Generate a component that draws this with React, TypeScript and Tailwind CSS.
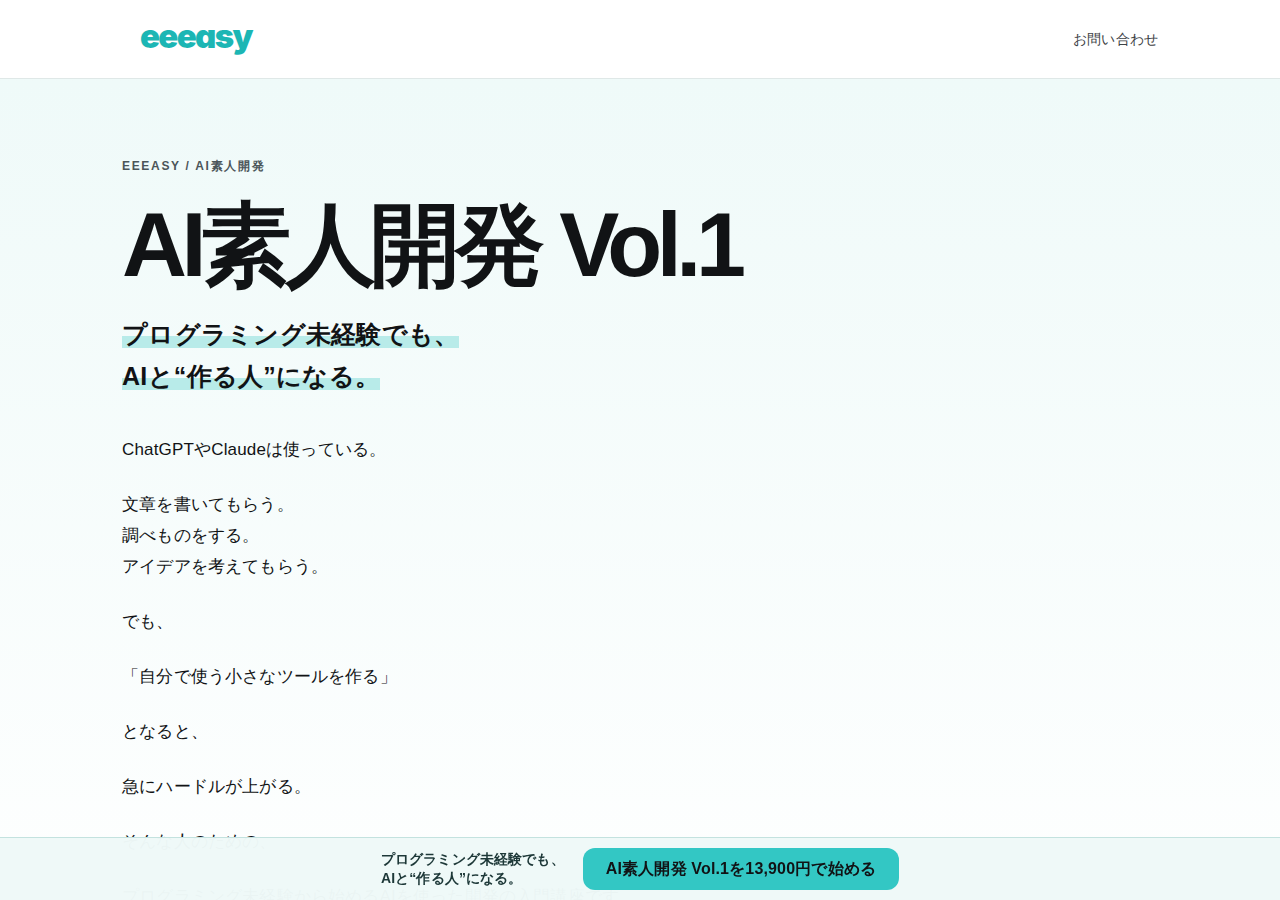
const paragraphs = [
  ['ChatGPTやClaudeは使っている。'],
  ['文章を書いてもらう。', '調べものをする。', 'アイデアを考えてもらう。'],
  ['でも、'],
  ['「自分で使う小さなツールを作る」'],
  ['となると、'],
  ['急にハードルが上がる。'],
  ['そんな人のための、'],
  ['プログラミング未経験から始めるAIを使った開発の入門講座です'],
];

function Header() {
  return (
    <header className="border-b border-[#dfe8e7] bg-white">
      <div className="mx-auto flex h-[78px] max-w-[1100px] items-center justify-between px-8">
        <a
          href="#top"
          className="pl-[18px] pb-1.5 font-['Inter',sans-serif] text-[33px] leading-10 font-black tracking-tighter text-[#1cb6b4] [font-feature-settings:'cv11']"
        >
          eeeasy
        </a>
        <nav>
          <a href="#contact" className="text-sm tracking-[0.01em] text-[#3d4246]">
            お問い合わせ
          </a>
        </nav>
      </div>
    </header>
  );
}

function Hero() {
  return (
    <section id="top" className="bg-linear-to-b from-[#effaf9] to-white">
      <div className="mx-auto max-w-[1100px] px-8 pt-[76px] pb-16">
        <p className="text-xs leading-[22px] font-bold tracking-[0.14em] text-[#4b5559]">
          EEEASY / AI素人開発
        </p>
        <h1 className="mt-4 text-[90px] leading-[104px] font-bold tracking-[-0.06em]">
          AI素人開発 Vol.1
        </h1>
        <p className="mt-4 text-[25px] leading-[42px] font-bold tracking-[0.01em]">
          <span className="bg-[linear-gradient(transparent_58%,#b8ebe9_58%)]">
            プログラミング未経験でも、
            <br />
            AIと“作る人”になる。
          </span>
        </p>
        <div className="mt-[37px] space-y-6 text-[17px] leading-[31px] tracking-[0.01em]">
          {paragraphs.map((lines) => (
            <p key={lines[0]}>
              {lines.map((line) => (
                <span key={line} className="block">
                  {line}
                </span>
              ))}
            </p>
          ))}
        </div>
      </div>
    </section>
  );
}

function StickyCta() {
  return (
    <div className="fixed inset-x-0 bottom-0 z-10 flex items-center justify-center gap-[18px] border-t border-[#c3e2df] bg-[#eff9f8]/98 px-4 py-[10px]">
      <p className="text-sm leading-[19px] font-bold tracking-[0.01em] text-[#1d3838]">
        プログラミング未経験でも、
        <br />
        AIと“作る人”になる。
      </p>
      <a
        href="#apply"
        className="rounded-xl bg-[#33c7c4] px-[23px] py-2 text-base leading-[26px] font-bold tracking-[0.01em] text-[#111315]"
      >
        AI素人開発 Vol.1を13,900円で始める
      </a>
    </div>
  );
}

export default function App() {
  return (
    <div
      lang="ja"
      className="min-h-screen bg-white font-['Liberation_Sans',sans-serif] text-[#111315]"
    >
      <Header />
      <main>
        <Hero />
      </main>
      <StickyCta />
    </div>
  );
}
